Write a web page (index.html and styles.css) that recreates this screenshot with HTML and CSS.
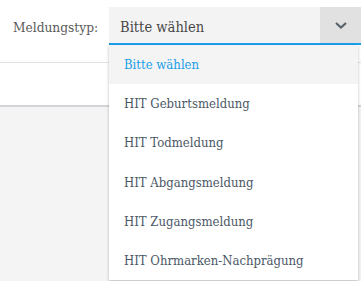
FILE: index.html
```html
<!DOCTYPE html>
<html lang="de">
<head>
  <meta charset="UTF-8">
  <title>Meldungstyp</title>
  <link rel="stylesheet" href="styles.css">
</head>
<body>
<div class="panel">
  <div class="form-row">
    <label class="field-label" for="typ">Meldungstyp:</label>
    <div class="select-box">
      <div class="select-value" id="typ">Bitte wählen</div>
      <div class="select-arrow">
        <svg width="14" height="9" viewBox="0 0 14 9"><path d="M2 2 L7 6.5 L12 2" fill="none" stroke="#56636e" stroke-width="2.2"/></svg>
      </div>
      <ul class="select-menu">
        <li class="active">Bitte wählen</li>
        <li>HIT Geburtsmeldung</li>
        <li>HIT Todmeldung</li>
        <li>HIT Abgangsmeldung</li>
        <li>HIT Zugangsmeldung</li>
        <li>HIT Ohrmarken-Nachprägung</li>
      </ul>
    </div>
  </div>
  <div class="panel-body"></div>
</div>
</body>
</html>
```

FILE: styles.css
```css
body {
  margin: 0;
  padding: 0;
  font-family: "DejaVu Serif Condensed", "DejaVu Serif", serif;
  background-color: #f4f4f4;
  height: 281px;
  overflow: hidden;
}

.panel {
  background-color: #ffffff;
  border-bottom: 2px solid #d4d4d8;
}

.form-row {
  height: 62px;
  display: flex;
  align-items: flex-start;
  border-bottom: 1px solid #e2e2e2;
}

.field-label {
  width: 96px;
  padding: 19px 0 0 13px;
  font-size: 13.6px;
  color: #5a5a5a;
}

.select-box {
  position: relative;
  margin-top: 7px;
  flex: 1;
  height: 36px;
  display: flex;
  background-color: #f3f3f3;
  border-bottom: 2px solid #1aa0ea;
}

.select-value {
  flex: 1;
  padding: 11px 0 0 11px;
  font-size: 14.6px;
  color: #484848;
}

.select-arrow {
  width: 41px;
  display: flex;
  align-items: center;
  justify-content: center;
  background-color: #e1e1e1;
}

.select-menu {
  position: absolute;
  top: 38px;
  left: 0;
  width: 249px;
  margin: 0;
  padding: 0;
  list-style: none;
  background-color: #ffffff;
  box-shadow: 0 1px 3px rgba(0, 0, 0, 0.25);
  z-index: 2;
}

.select-menu li {
  height: 39.2px;
  padding-left: 15px;
  line-height: 39px;
  font-size: 13px;
  color: #4b5866;
}

.select-menu li.active {
  background-color: #f4f4f4;
  color: #1a9ee8;
}

.panel-body {
  height: 42px;
}
```
